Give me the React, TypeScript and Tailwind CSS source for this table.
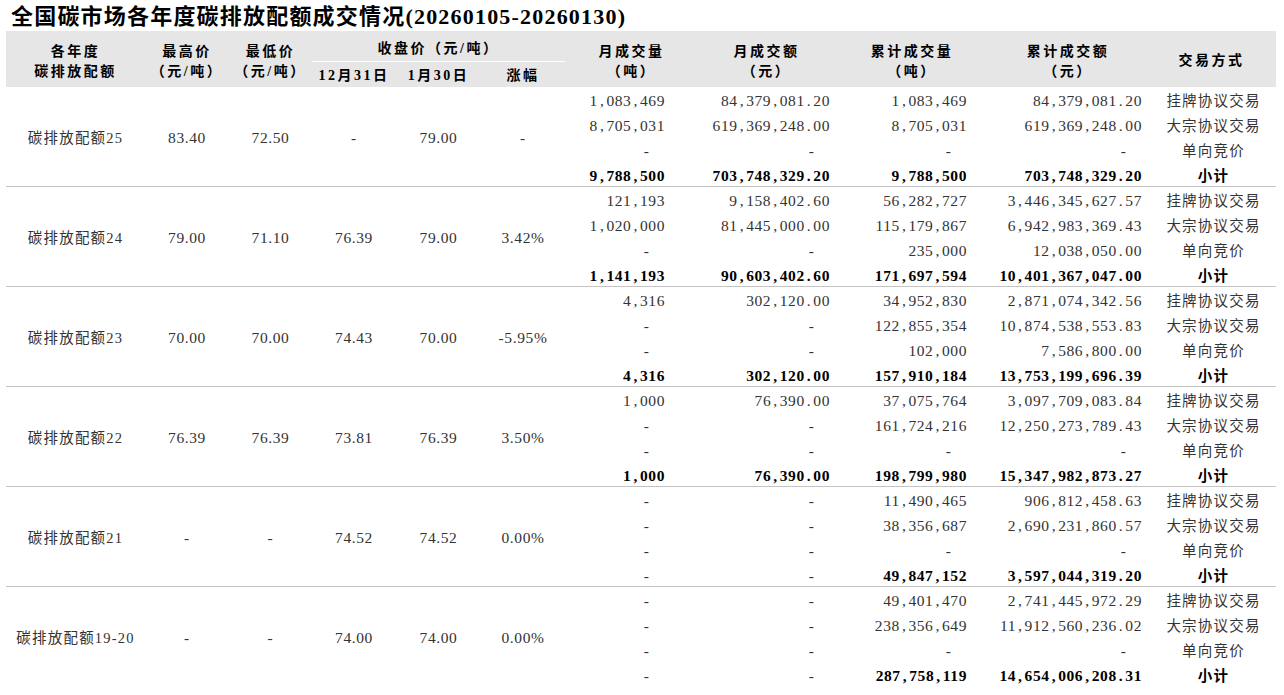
import React from 'react';

// column widths measured from the sheet: 6 | 145 | 229 | 312 | 396 | 481 | 565 | 698 | 835 | 989 | 1147 | 1276
const COLS =
  'grid grid-cols-[139px_84px_83px_84px_85px_84px_133px_137px_154px_158px_129px]';

type Row = [string, string, string, string, string];

interface Group {
  name: string;
  high: string;
  low: string;
  closePrev: string;
  closeNow: string;
  change: string;
  rows: Row[];
}

const GROUPS: Group[] = [
  {
    name: '碳排放配额25',
    high: '83.40',
    low: '72.50',
    closePrev: '-',
    closeNow: '79.00',
    change: '-',
    rows: [
      ['1,083,469', '84,379,081.20', '1,083,469', '84,379,081.20', '挂牌协议交易'],
      ['8,705,031', '619,369,248.00', '8,705,031', '619,369,248.00', '大宗协议交易'],
      ['-', '-', '-', '-', '单向竞价'],
      ['9,788,500', '703,748,329.20', '9,788,500', '703,748,329.20', '小计'],
    ],
  },
  {
    name: '碳排放配额24',
    high: '79.00',
    low: '71.10',
    closePrev: '76.39',
    closeNow: '79.00',
    change: '3.42%',
    rows: [
      ['121,193', '9,158,402.60', '56,282,727', '3,446,345,627.57', '挂牌协议交易'],
      ['1,020,000', '81,445,000.00', '115,179,867', '6,942,983,369.43', '大宗协议交易'],
      ['-', '-', '235,000', '12,038,050.00', '单向竞价'],
      ['1,141,193', '90,603,402.60', '171,697,594', '10,401,367,047.00', '小计'],
    ],
  },
  {
    name: '碳排放配额23',
    high: '70.00',
    low: '70.00',
    closePrev: '74.43',
    closeNow: '70.00',
    change: '-5.95%',
    rows: [
      ['4,316', '302,120.00', '34,952,830', '2,871,074,342.56', '挂牌协议交易'],
      ['-', '-', '122,855,354', '10,874,538,553.83', '大宗协议交易'],
      ['-', '-', '102,000', '7,586,800.00', '单向竞价'],
      ['4,316', '302,120.00', '157,910,184', '13,753,199,696.39', '小计'],
    ],
  },
  {
    name: '碳排放配额22',
    high: '76.39',
    low: '76.39',
    closePrev: '73.81',
    closeNow: '76.39',
    change: '3.50%',
    rows: [
      ['1,000', '76,390.00', '37,075,764', '3,097,709,083.84', '挂牌协议交易'],
      ['-', '-', '161,724,216', '12,250,273,789.43', '大宗协议交易'],
      ['-', '-', '-', '-', '单向竞价'],
      ['1,000', '76,390.00', '198,799,980', '15,347,982,873.27', '小计'],
    ],
  },
  {
    name: '碳排放配额21',
    high: '-',
    low: '-',
    closePrev: '74.52',
    closeNow: '74.52',
    change: '0.00%',
    rows: [
      ['-', '-', '11,490,465', '906,812,458.63', '挂牌协议交易'],
      ['-', '-', '38,356,687', '2,690,231,860.57', '大宗协议交易'],
      ['-', '-', '-', '-', '单向竞价'],
      ['-', '-', '49,847,152', '3,597,044,319.20', '小计'],
    ],
  },
  {
    name: '碳排放配额19-20',
    high: '-',
    low: '-',
    closePrev: '74.00',
    closeNow: '74.00',
    change: '0.00%',
    rows: [
      ['-', '-', '49,401,470', '2,741,445,972.29', '挂牌协议交易'],
      ['-', '-', '238,356,649', '11,912,560,236.02', '大宗协议交易'],
      ['-', '-', '-', '-', '单向竞价'],
      ['-', '-', '287,758,119', '14,654,006,208.31', '小计'],
    ],
  },
];

// right-edge padding of the four amount columns
const AMOUNT_PAD = ['pr-[33px]', 'pr-[5px]', 'pr-[22px]', 'pr-[5px]'];

// separators get the same cell width as a digit, like the half-width font of the sheet
function Num({ v }: { v: string }) {
  if (v === '-') return <span className="mr-[15px] text-[15.5px]">-</span>;
  return (
    <span className="text-[15.5px] tracking-[0.6px]">
      {v.split(/([,.])/).map((part, i) =>
        part === ',' || part === '.' ? (
          <span key={i} className="inline-block w-[8.5px] text-center">
            {part}
          </span>
        ) : (
          <span key={i}>{part}</span>
        ),
      )}
    </span>
  );
}

function HeadCell({ lines }: { lines: string[] }) {
  return (
    <div className="row-span-2 flex flex-col items-center pt-[11px]">
      {lines.map((l) => (
        <span key={l}>{l}</span>
      ))}
    </div>
  );
}

function Header() {
  return (
    <div
      className={`${COLS} h-[56px] grid-rows-[31px_25px] bg-[#e6e6e6] text-[14px] font-bold leading-[20px] tracking-[2.5px] text-black`}
    >
      <HeadCell lines={['各年度', '碳排放配额']} />
      <HeadCell lines={['最高价', '（元/吨）']} />
      <HeadCell lines={['最低价', '（元/吨）']} />
      <div className="col-span-3 flex items-center justify-center border-b border-white pt-[5px]">
        收盘价（元/吨）
      </div>
      <HeadCell lines={['月成交量', '（吨）']} />
      <HeadCell lines={['月成交额', '（元）']} />
      <HeadCell lines={['累计成交量', '（吨）']} />
      <HeadCell lines={['累计成交额', '（元）']} />
      <div className="row-span-2 flex items-center justify-center pt-[4px]">交易方式</div>
      <div className="flex items-center justify-center pt-[2px]">12月31日</div>
      <div className="flex items-center justify-center pt-[2px]">1月30日</div>
      <div className="flex items-center justify-center pt-[2px]">涨幅</div>
    </div>
  );
}

function GroupRows({ g, last }: { g: Group; last: boolean }) {
  const prices = [g.high, g.low, g.closePrev, g.closeNow, g.change];
  return (
    <div
      className={`${COLS} h-[100px] grid-rows-[repeat(4,25px)] ${
        last ? '' : 'border-b border-[#c4c4c4]'
      }`}
    >
      <div className="row-span-4 flex items-center justify-center pt-[2px]">{g.name}</div>
      {prices.map((v, i) => (
        <div
          key={i}
          className="row-span-4 flex items-center justify-center pt-[2px] text-[15.5px] tracking-[0.6px]"
        >
          {v}
        </div>
      ))}
      {g.rows.map((row, r) => {
        const total = r === 3;
        return row.map((v, c) =>
          c < 4 ? (
            <div
              key={`${r}-${c}`}
              className={`flex items-center justify-end pt-[2px] ${AMOUNT_PAD[c]} ${
                total && v !== '-' ? 'font-bold text-black' : ''
              }`}
            >
              <Num v={v} />
            </div>
          ) : (
            <div
              key={`${r}-${c}`}
              className={`flex items-center justify-center pt-[2px] pl-[4px] ${
                total ? 'font-bold text-black' : ''
              }`}
            >
              {v}
            </div>
          ),
        );
      })}
    </div>
  );
}

export default function App() {
  return (
    <div className="h-[695px] w-[1284px] overflow-hidden bg-white font-['Liberation_Serif','Noto_Sans_CJK_SC',serif] text-[14.5px] leading-[20px] tracking-[1.2px] text-[#333]">
      <h1 className="h-[31px] pl-[11px] pt-[2px] text-[22px] font-bold leading-[29px] tracking-[1.2px] text-black">
        全国碳市场各年度碳排放配额成交情况(20260105-20260130)
      </h1>
      <div className="ml-[6px] w-[1270px]">
        <Header />
        {GROUPS.map((g, i) => (
          <GroupRows key={g.name} g={g} last={i === GROUPS.length - 1} />
        ))}
      </div>
    </div>
  );
}
